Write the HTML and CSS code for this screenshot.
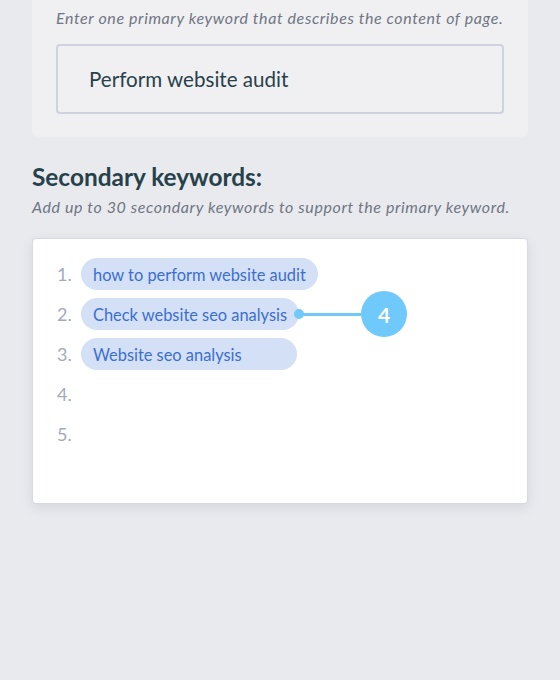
FILE: index.html
```html
<!DOCTYPE html>
<html>
<head>
<meta charset="utf-8">
<link rel="stylesheet" href="styles.css">
</head>
<body>
<div class="primary-card">
  <p class="hint">Enter one primary keyword that describes the content of page.</p>
  <div class="input">Perform website audit</div>
</div>
<section class="secondary">
  <h2 class="title">Secondary keywords:</h2>
  <p class="hint sub">Add up to 30 secondary keywords to support the primary keyword.</p>
  <div class="box">
    <div class="row"><span class="num">1.</span><span class="chip">how to perform website audit</span></div>
    <div class="row"><span class="num">2.</span><span class="chip">Check website seo analysis<span class="callout"><span class="dot"></span><span class="line"></span><span class="badge">4</span></span></span></div>
    <div class="row"><span class="num">3.</span><span class="chip">Website seo analysis</span></div>
    <div class="row"><span class="num">4.</span></div>
    <div class="row"><span class="num">5.</span></div>
  </div>
</section>
</body>
</html>
```
FILE: styles.css
```css
html, body { margin: 0; padding: 0; }
body {
  background: #e9eaee;
  font-family: Lato, "Noto Sans", sans-serif;
  width: 560px;
  height: 680px;
  overflow: hidden;
}
.primary-card {
  margin: 0 32px;
  background: #f0f0f2;
  border-radius: 0 0 6px 6px;
  padding: 8px 24px 23px;
}
.hint {
  margin: 0;
  font-style: italic;
  font-size: 16px;
  letter-spacing: 0.6px;
  line-height: 20px;
  white-space: nowrap;
  color: #6f7683;
}
.input {
  margin-top: 16px;
  height: 66px;
  border: 2px solid #cfd3de;
  border-radius: 4px;
  box-sizing: content-box;
  padding-left: 31px;
  display: flex;
  align-items: center;
  font-size: 20.6px;
  color: #29404a;
}
.secondary { margin: 0 32px; }
.title {
  margin: 26px 0 0;
  font-size: 24.4px;
  line-height: 28px;
  font-weight: 700;
  color: #27414a;
}
.sub {
  margin-top: 6px;
}
.box {
  margin-top: 21px;
  background: #fff;
  border: 1px solid #d6d9e1;
  border-radius: 4px;
  box-shadow: 0 4px 12px rgba(40, 50, 80, 0.10);
  padding: 19px 24px 53px;
  display: flex;
  flex-direction: column;
  gap: 8px;
}
.row {
  height: 32px;
  display: flex;
  align-items: center;
}
.num {
  width: 24px;
  font-size: 18px;
  color: #a3aabb;
}
.chip {
  position: relative;
  box-sizing: border-box;
  min-width: 216px;
  height: 32px;
  display: flex;
  align-items: center;
  padding: 0 12px;
  border-radius: 16px;
  background: #d4e0f5;
  color: #3b6fcf;
  font-size: 16.4px;
  white-space: nowrap;
}
.callout {
  position: absolute;
  left: calc(100% - 5px);
  top: 50%;
  transform: translateY(-50%);
  display: flex;
  align-items: center;
}
.dot {
  width: 10px;
  height: 10px;
  border-radius: 50%;
  background: #70c9fb;
}
.line {
  width: 60px;
  height: 3px;
  margin-left: -3px;
  background: #70c9fb;
}
.badge {
  width: 46px;
  height: 46px;
  border-radius: 50%;
  background: #70c9fb;
  color: #fff;
  font-weight: 700;
  font-size: 21px;
  display: flex;
  align-items: center;
  justify-content: center;
}
```
